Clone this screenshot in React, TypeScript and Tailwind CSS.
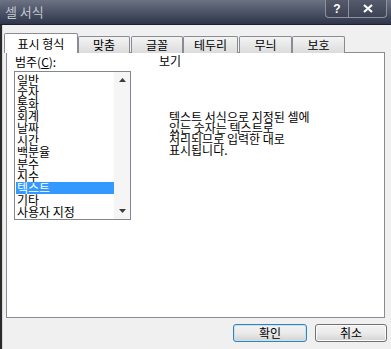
import React from "react";

const items = ["일반", "숫자", "통화", "회계", "날짜", "시간", "백분율", "분수", "지수", "텍스트", "기타", "사용자 지정"];

const tabs = [
  { label: "맞춤", cls: "w-[52px] ml-0" },
  { label: "글꼴", cls: "w-[52px] ml-[1px]" },
  { label: "테두리", cls: "w-[55px] ml-0" },
  { label: "무늬", cls: "w-[53px] ml-[1px]" },
  { label: "보호", cls: "w-[53px] ml-0" },
];

const Arrow: React.FC<{ down?: boolean }> = ({ down }) => (
  <svg width="7" height="4" viewBox="0 0 7 4">
    <path d={down ? "M0 0 L7 0 L3.5 4 Z" : "M0 4 L7 4 L3.5 0 Z"} fill="#3c3c3c" />
  </svg>
);

export default function App() {
  return (
    <div className="w-[391px] h-[349px] overflow-hidden bg-[#f0f0f0] flex flex-col font-['Noto_Sans_CJK_KR','Noto_Sans',sans-serif] text-black">
      {/* title bar */}
      <div className="h-[25px] shrink-0 flex items-start justify-between bg-gradient-to-b from-[#6c7384] to-[#30364a] border-b border-[#1c202c]">
        <span className="pl-[5px] pt-[3px] text-[13px] leading-[17px] text-[#c2c6cf]">셀 서식</span>
        <div className="flex mr-[4px]">
          <div className="w-[24px] h-[18px] flex items-center justify-center border border-t-0 border-[#8d929e] rounded-bl-[4px] bg-gradient-to-b from-[#555b6b] to-[#3d4354] text-white text-[12px] font-bold font-['Liberation_Sans',sans-serif]">
            ?
          </div>
          <div className="w-[38px] h-[18px] flex items-center justify-center border border-t-0 border-l-0 border-[#8d929e] rounded-br-[4px] bg-gradient-to-b from-[#555b6b] to-[#3d4354]">
            <svg width="10" height="9" viewBox="0 0 10 9">
              <path d="M1 1 L9 8 M9 1 L1 8" stroke="#ffffff" strokeWidth="2.2" />
            </svg>
          </div>
        </div>
      </div>

      <div className="flex flex-1">
        <div className="w-[3px] bg-[#2a2a2a] border-r border-[#d8d8d8]" />
        <div className="flex-1 flex flex-col pt-[8px]">
          {/* tabs */}
          <div className="flex items-end pl-[1px] -mb-px relative z-10">
            <div className="w-[74px] h-[20px] bg-white border border-b-0 border-[#898c95] rounded-t-[2px] flex items-center justify-center text-[12px] leading-[14px]">
              표시 형식
            </div>
            {tabs.map((t) => (
              <div
                key={t.label}
                className={`${t.cls} h-[17px] border border-b-0 border-[#898c95] rounded-t-[2px] bg-gradient-to-b from-[#f4f4f4] to-[#dcdcdc] flex items-center justify-center text-[12px] leading-[14px]`}
              >
                {t.label}
              </div>
            ))}
          </div>

          {/* panel */}
          <div className="ml-[3px] w-[379px] h-[266px] bg-white border border-[#898c95] flex">
            <div className="pl-[8px] flex flex-col">
              <div className="pt-[2px] text-[12px] leading-[14px]">
                범주(<span className="underline">C</span>):
              </div>
              <div className="mt-[2px] -ml-px w-[117px] h-[149px] border border-[#828790] flex">
                <div className="w-[99px] pt-[2px]">
                  {items.map((it) => (
                    <div
                      key={it}
                      className={`h-[12px] leading-[12px] text-[12px] ml-px pl-px whitespace-nowrap ${
                        it === "텍스트" ? "bg-[#3399ff] text-white" : ""
                      }`}
                    >
                      {it}
                    </div>
                  ))}
                </div>
                <div className="w-[16px] bg-[#f5f5f5] flex flex-col justify-between">
                  <div className="h-[16px] flex items-center justify-center">
                    <Arrow />
                  </div>
                  <div className="h-[16px] flex items-center justify-center">
                    <Arrow down />
                  </div>
                </div>
              </div>
            </div>
            <div className="ml-[28px] flex flex-col">
              <div className="pt-[1px] text-[12px] leading-[14px]">보기</div>
              <div className="mt-[43px] ml-[10px] text-[12px] leading-[11px] whitespace-nowrap">
                <div className="h-[11px]">텍스트 서식으로 지정된 셀에</div>
                <div className="h-[11px]">있는 숫자는 텍스트로</div>
                <div className="h-[11px]">처리되므로 입력한 대로</div>
                <div className="h-[11px]">표시됩니다.</div>
              </div>
            </div>
          </div>

          {/* buttons */}
          <div className="flex justify-end gap-[8px] pr-[4px] mt-[6px]">
            <button className="w-[74px] h-[18px] rounded-[3px] border border-[#3c7fb1] bg-gradient-to-b from-[#f2f2f2] via-[#ebebeb] to-[#d2d2d2] shadow-[inset_0_0_0_1px_#bfe3f7] text-[12px] leading-[14px] flex items-center justify-center">
              확인
            </button>
            <button className="w-[72px] h-[18px] rounded-[3px] border border-[#707070] bg-gradient-to-b from-[#f2f2f2] via-[#ebebeb] to-[#d2d2d2] shadow-[inset_0_0_0_1px_#fcfcfc] text-[12px] leading-[14px] flex items-center justify-center">
              취소
            </button>
          </div>
        </div>
      </div>
    </div>
  );
}
